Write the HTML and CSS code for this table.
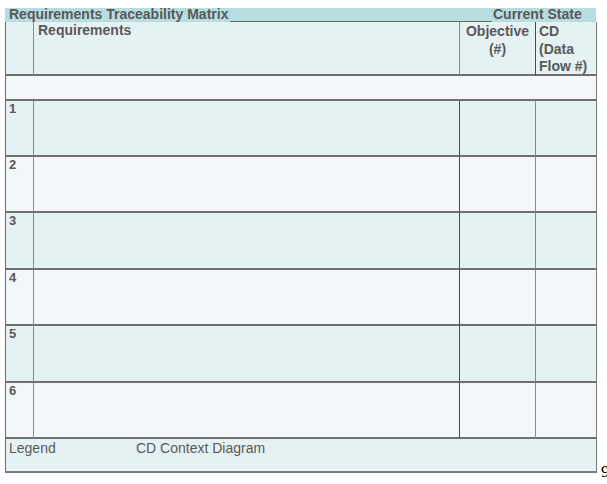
FILE: index.html
```html
<!DOCTYPE html>
<html>
<head>
<meta charset="utf-8">
<link rel="stylesheet" href="styles.css">
</head>
<body>
<div class="page">
  <div class="titlebar">
    <span class="title">Requirements Traceability Matrix</span>
    <span class="rule"></span>
    <span class="title state">Current State</span>
  </div>
  <div class="matrix">
    <div class="cell head"></div>
    <div class="cell head req">Requirements</div>
    <div class="cell head obj">Objective<br>(#)</div>
    <div class="cell head cd last">CD<br>(Data<br>Flow #)</div>

    <div class="cell blank span"></div>

    <div class="cell num a">1</div><div class="cell a"></div><div class="cell a"></div><div class="cell a last"></div>
    <div class="cell num b">2</div><div class="cell b"></div><div class="cell b"></div><div class="cell b last"></div>
    <div class="cell num a">3</div><div class="cell a"></div><div class="cell a"></div><div class="cell a last"></div>
    <div class="cell num b">4</div><div class="cell b"></div><div class="cell b"></div><div class="cell b last"></div>
    <div class="cell num a">5</div><div class="cell a"></div><div class="cell a"></div><div class="cell a last"></div>
    <div class="cell num b">6</div><div class="cell b"></div><div class="cell b"></div><div class="cell b last"></div>

    <div class="cell legend span">
      <span class="leg1">Legend</span>
      <span class="leg2">CD Context Diagram</span>
    </div>
  </div>
  <span class="pageno">9</span>
</div>
</body>
</html>
```
FILE: styles.css
```css
html, body {
  margin: 0;
  padding: 0;
  background: #ffffff;
}
.page {
  position: relative;
  width: 607px;
  height: 484px;
  padding: 8px 0 0 5px;
  box-sizing: border-box;
  font-family: "Liberation Sans", Arial, sans-serif;
  color: #595959;
}
.titlebar {
  display: flex;
  width: 591px;
  height: 14px;
  background: #b7dde0;
  align-items: stretch;
}
.title {
  font-weight: bold;
  font-size: 14px;
  line-height: 15px;
  margin-top: -1px;
  padding-left: 4px;
  white-space: nowrap;
}
.rule {
  flex: 1;
  border-bottom: 2px solid #6b6b6b;
  margin-left: 2px;
  margin-bottom: -1px;
}
.state {
  padding-left: 1px;
  width: 104px;
  box-sizing: border-box;
}
.matrix {
  display: grid;
  width: 592px;
  box-sizing: border-box;
  grid-template-columns: 28px 426px 76px 60px;
  grid-template-rows: 54px 25px 56px 56px 57px 56px 57px 56px 32px;
  border-left: 1px solid #6b6b6b;
  border-right: 2px solid #7a7a7a;
  border-bottom: 2px solid #7a7a7a;
}
.cell {
  box-sizing: border-box;
  border-right: 1px solid #8a8a8a;
  border-bottom: 2px solid #707070;
}
.cell.last {
  border-right: none;
}
.head {
  background: #e5f1f2;
  font-weight: bold;
  font-size: 14px;
  line-height: 17.5px;
}
.req {
  padding: 0 0 0 4px;
  line-height: 16px;
}
.obj {
  text-align: center;
  padding-top: 1px;
  border-right-color: #555;
}
.cd {
  padding: 1px 0 0 3px;
}
.span {
  grid-column: 1 / -1;
  border-right: none;
}
.blank {
  background: #f2f7fa;
}
.a {
  background: #e5f1f2;
}
.b {
  background: #f2f7fa;
}
.cell:nth-child(4n+3) {
  border-right-color: #4a4a4a;
}
.num {
  font-weight: bold;
  font-size: 13px;
  line-height: 16px;
  padding: 0 0 0 3px;
}
.legend {
  background: #e5f1f2;
  border-bottom: none;
  font-size: 14px;
  line-height: 16px;
  padding: 1px 0 0 3px;
  display: flex;
}
.leg1 {
  width: 127px;
}
.pageno {
  position: absolute;
  left: 601px;
  top: 462px;
  font-family: "Liberation Serif", "Times New Roman", serif;
  font-size: 17px;
  color: #000;
}
```
